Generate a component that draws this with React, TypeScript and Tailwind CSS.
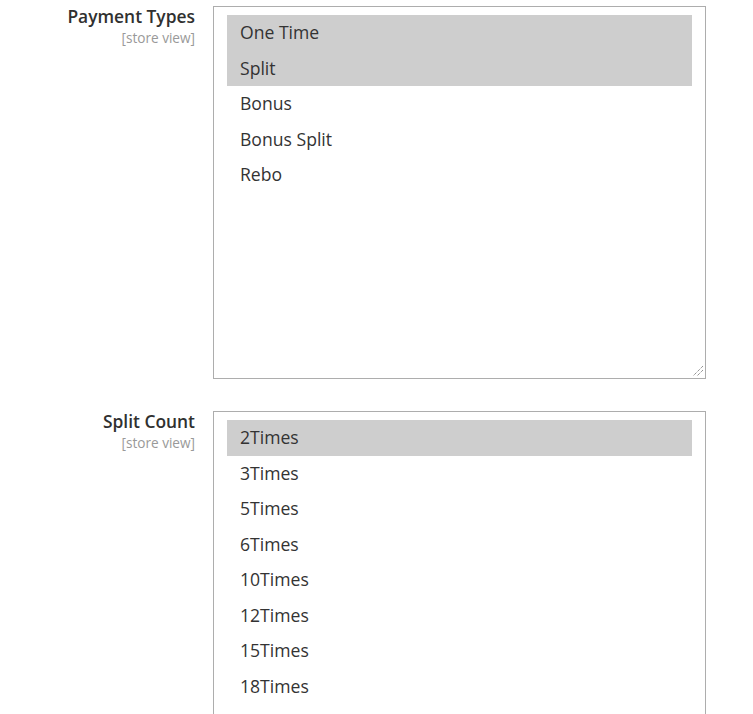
const paymentTypes = [
  { label: "One Time", selected: true },
  { label: "Split", selected: true },
  { label: "Bonus", selected: false },
  { label: "Bonus Split", selected: false },
  { label: "Rebo", selected: false },
]

const splitCounts = [
  { label: "2Times", selected: true },
  { label: "3Times", selected: false },
  { label: "5Times", selected: false },
  { label: "6Times", selected: false },
  { label: "10Times", selected: false },
  { label: "12Times", selected: false },
  { label: "15Times", selected: false },
  { label: "18Times", selected: false },
]

interface Option {
  label: string
  selected: boolean
}

function FieldLabel({ title }: { title: string }) {
  return (
    <div className="w-[195px] shrink-0 text-right -mt-[2px]">
      <div className="text-[17.4px] leading-[24px] font-semibold text-[#303030]">{title}</div>
      <div className="text-[13.6px] leading-[19px] text-[#999999]">[store view]</div>
    </div>
  )
}

function MultiSelect({ options, height, grip }: { options: Option[]; height: string; grip?: boolean }) {
  return (
    <div className={`relative w-[493px] ${height} border border-[#adadad] bg-white overflow-hidden pt-2 px-[13px]`}>
      {options.map((o) => (
        <div
          key={o.label}
          className={`h-[35.5px] flex items-center pl-[13px] pb-px text-[17.6px] text-[#333333] ${
            o.selected ? "bg-[#cecece]" : ""
          }`}
        >
          {o.label}
        </div>
      ))}
      {grip && (
        <svg className="absolute right-[1px] bottom-[1px]" width="12" height="12" viewBox="0 0 12 12">
          <line x1="11" y1="1" x2="1" y2="11" stroke="#666" strokeWidth="1" strokeDasharray="1 1" />
          <line x1="11" y1="5" x2="5" y2="11" stroke="#666" strokeWidth="1" strokeDasharray="1 1" />
        </svg>
      )}
    </div>
  )
}

export default function App() {
  return (
    <div
      className="w-[753px] h-[714px] overflow-hidden bg-white pt-[6px]"
      style={{ fontFamily: "'Open Sans', 'Noto Sans', sans-serif" }}
    >
      <div className="flex gap-[18px]">
        <FieldLabel title="Payment Types" />
        <MultiSelect options={paymentTypes} height="h-[373px]" grip />
      </div>
      <div className="flex gap-[18px] mt-[32px]">
        <FieldLabel title="Split Count" />
        <MultiSelect options={splitCounts} height="h-[400px]" />
      </div>
    </div>
  )
}
